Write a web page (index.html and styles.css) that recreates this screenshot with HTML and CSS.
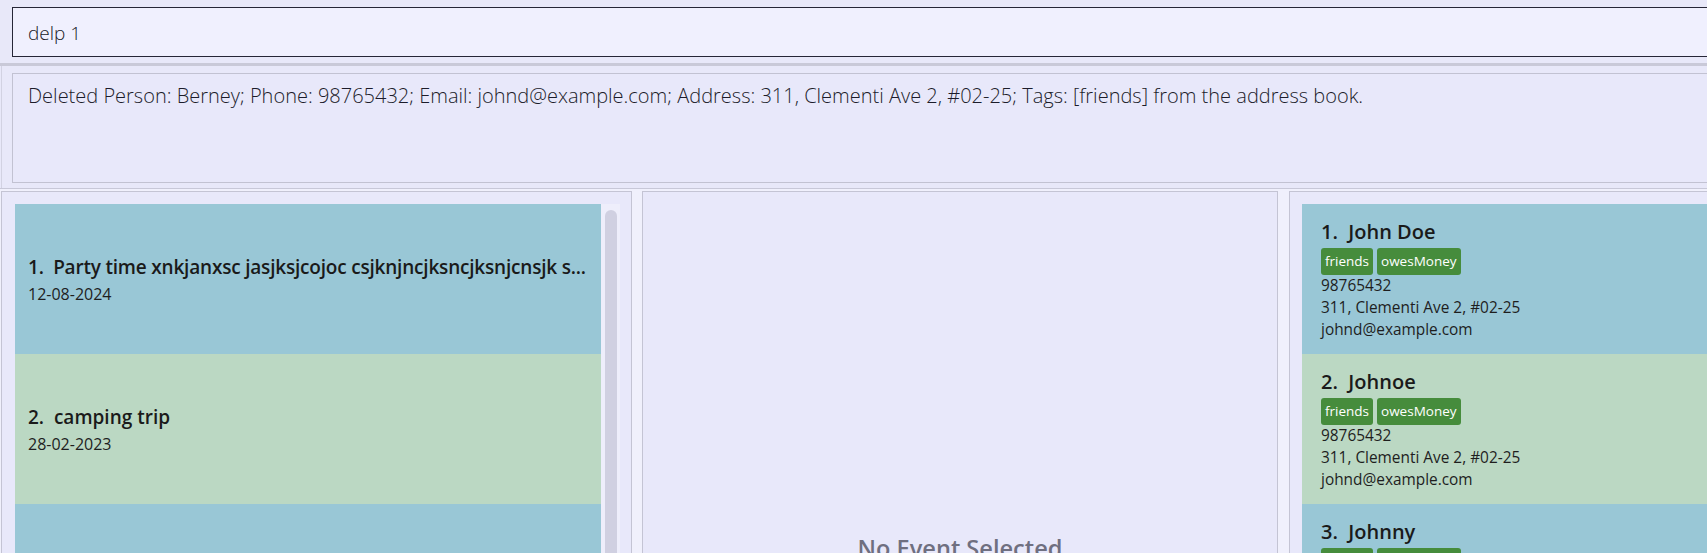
FILE: index.html
```html
<!DOCTYPE html>
<html lang="en">
<head>
<meta charset="utf-8">
<title>Address Book</title>
<link rel="stylesheet" href="styles.css">
</head>
<body>
<div class="app">
  <div class="command-pane">
    <div class="command-box">delp 1</div>
  </div>
  <div class="divider"></div>
  <div class="result-pane">
    <div class="result-box">Deleted Person: Berney; Phone: 98765432; Email: johnd@example.com; Address: 311, Clementi Ave 2, #02-25; Tags: [friends] from the address book.</div>
  </div>
  <div class="divider-thin"></div>
  <div class="lower">
    <div class="panel events">
      <div class="cards">
        <div class="card event blue">
          <div class="etitle long">1.&nbsp;&nbsp;Party time xnkjanxsc jasjksjcojoc csjknjncjksncjksnjcnsjk s...</div>
          <div class="edate">12-08-2024</div>
        </div>
        <div class="card event green">
          <div class="etitle">2.&nbsp;&nbsp;camping trip</div>
          <div class="edate">28-02-2023</div>
        </div>
        <div class="card event blue"></div>
      </div>
      <div class="track"><div class="thumb"></div></div>
    </div>
    <div class="panel detail">
      <div class="empty">No Event Selected</div>
    </div>
    <div class="panel persons">
      <div class="card person blue">
        <div class="pname">1.&nbsp;&nbsp;John Doe</div>
        <div class="tags"><span class="tag">friends</span><span class="tag">owesMoney</span></div>
        <div class="pline first">98765432</div>
        <div class="pline">311, Clementi Ave 2, #02-25</div>
        <div class="pline">johnd@example.com</div>
      </div>
      <div class="card person green">
        <div class="pname">2.&nbsp;&nbsp;Johnoe</div>
        <div class="tags"><span class="tag">friends</span><span class="tag">owesMoney</span></div>
        <div class="pline first">98765432</div>
        <div class="pline">311, Clementi Ave 2, #02-25</div>
        <div class="pline">johnd@example.com</div>
      </div>
      <div class="card person blue">
        <div class="pname">3.&nbsp;&nbsp;Johnny</div>
        <div class="tags"><span class="tag">friends</span><span class="tag">owesMoney</span></div>
        <div class="pline first">98765432</div>
        <div class="pline">311, Clementi Ave 2, #02-25</div>
        <div class="pline">johnd@example.com</div>
      </div>
    </div>
  </div>
</div>
</body>
</html>
```

FILE: styles.css
```css
html, body {
  margin: 0;
  padding: 0;
  height: 100%;
  overflow: hidden;
}

body {
  background: #e8e8f9;
  font-family: "Open Sans", "Noto Sans", sans-serif;
  color: #1c1c24;
}

.app {
  width: 1930px;
}

.command-pane {
  padding: 7px 12px 6px 12px;
}

.command-box {
  height: 46px;
  padding: 2px 0 0 15px;
  border: 1px solid #262637;
  background: #f0f0fe;
  font-size: 19px;
  font-weight: 300;
  line-height: 46px;
  color: #1a1a28;
}

.divider {
  height: 3px;
  background: #c9c9d8;
}

.result-pane {
  margin-left: 1px;
  border-left: 1px solid #d2d2e2;
  padding: 7px 12px 5px 10px;
}

.result-box {
  height: 98px;
  padding: 10px 15px 0 15px;
  border: 1px solid #c2c2d2;
  background: #e8e8fa;
  font-size: 20px;
  font-weight: 300;
  line-height: 24px;
  color: #1c1c2a;
  white-space: nowrap;
}

.divider-thin {
  height: 1px;
  background: #c8c8d8;
}

.lower {
  display: flex;
  background: #f0f0fc;
  padding: 2px 0 0 1px;
  height: 400px;
}

.panel {
  box-sizing: border-box;
  border: 1px solid #c4c4d4;
  background: #e8e8fa;
  height: 420px;
}

.events {
  width: 631px;
  display: flex;
  padding: 12px 11px 0 13px;
}

.cards {
  width: 586px;
}

.track {
  width: 19px;
  background: #eeeefb;
}

.thumb {
  margin: 6px 0 0 4px;
  width: 12px;
  height: 420px;
  border-radius: 6px;
  background: #d0d0e1;
}

.detail {
  width: 636px;
  margin-left: 10px;
  text-align: center;
}

.empty {
  padding-top: 340px;
  font-size: 23.6px;
  font-weight: 600;
  color: #6f6f80;
}

.persons {
  flex: 1;
  margin-left: 11px;
  padding: 12px;
}

.card {
  box-sizing: border-box;
  height: 150px;
}

.blue {
  background: #99c7d6;
}

.green {
  background: #bbd8c3;
}

.event {
  display: flex;
  flex-direction: column;
  justify-content: center;
  padding: 0 13px 0 13px;
}

.etitle {
  font-size: 19px;
  font-weight: 600;
  line-height: 24px;
  white-space: nowrap;
  color: #1a1a1a;
}

.etitle.long {
  letter-spacing: -0.2px;
}

.edate {
  margin-top: 5px;
  font-size: 16px;
  line-height: 20px;
  color: #1e1e1e;
}

.person {
  padding: 14px 19px 0 19px;
}

.pname {
  font-size: 20px;
  font-weight: 600;
  line-height: 28px;
  color: #1a1a1a;
}

.tags {
  display: flex;
  gap: 4px;
  margin-top: 2px;
}

.tag {
  height: 27px;
  padding: 0 4px;
  border-radius: 3px;
  background: #468c3c;
  color: #ffffff;
  font-size: 13.5px;
  font-weight: 400;
  line-height: 27px;
}

.pline {
  font-size: 15.4px;
  line-height: 22px;
  color: #1e1e1e;
}
```
